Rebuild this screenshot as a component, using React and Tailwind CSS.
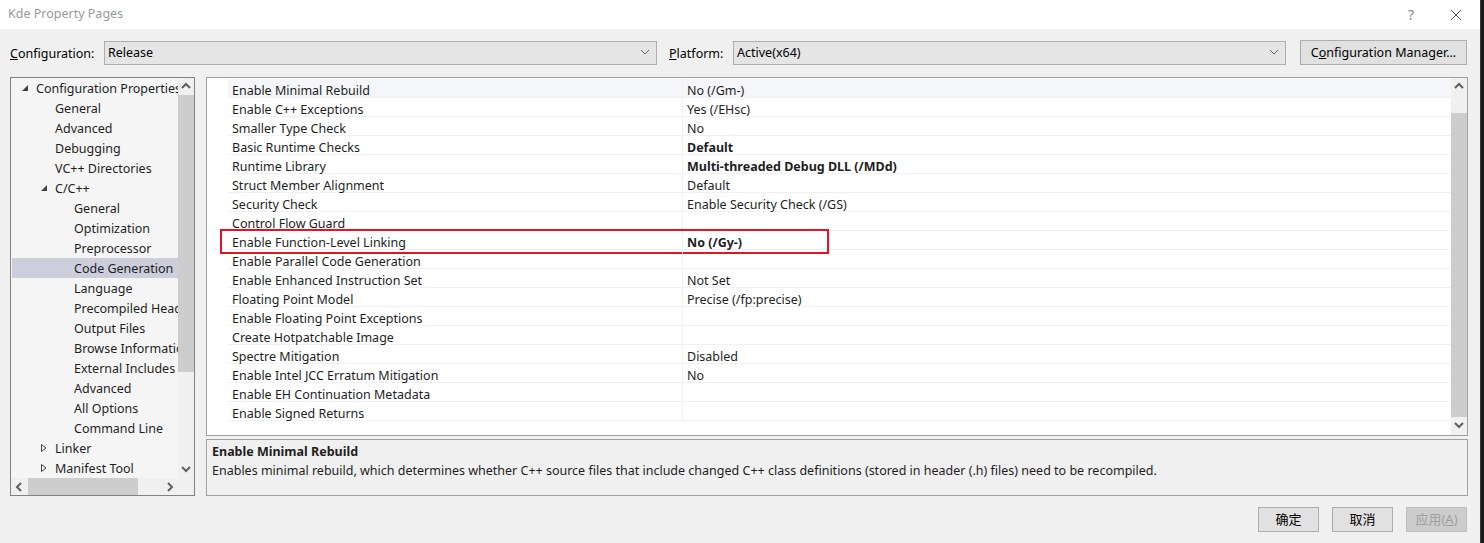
import React from "react";

const FONT = { fontFamily: '"Noto Sans", "Noto Sans CJK SC", sans-serif' };

const treeItems = [
  { label: "Configuration Properties", indent: 0, arrow: "open" },
  { label: "General", indent: 1 },
  { label: "Advanced", indent: 1 },
  { label: "Debugging", indent: 1 },
  { label: "VC++ Directories", indent: 1 },
  { label: "C/C++", indent: 1, arrow: "open" },
  { label: "General", indent: 2 },
  { label: "Optimization", indent: 2 },
  { label: "Preprocessor", indent: 2 },
  { label: "Code Generation", indent: 2, selected: true },
  { label: "Language", indent: 2 },
  { label: "Precompiled Headers", indent: 2 },
  { label: "Output Files", indent: 2 },
  { label: "Browse Information", indent: 2 },
  { label: "External Includes", indent: 2 },
  { label: "Advanced", indent: 2 },
  { label: "All Options", indent: 2 },
  { label: "Command Line", indent: 2 },
  { label: "Linker", indent: 1, arrow: "closed" },
  { label: "Manifest Tool", indent: 1, arrow: "closed" },
];

const props = [
  ["Enable Minimal Rebuild", "No (/Gm-)"],
  ["Enable C++ Exceptions", "Yes (/EHsc)"],
  ["Smaller Type Check", "No"],
  ["Basic Runtime Checks", "Default", true],
  ["Runtime Library", "Multi-threaded Debug DLL (/MDd)", true],
  ["Struct Member Alignment", "Default"],
  ["Security Check", "Enable Security Check (/GS)"],
  ["Control Flow Guard", ""],
  ["Enable Function-Level Linking", "No (/Gy-)", true, true],
  ["Enable Parallel Code Generation", ""],
  ["Enable Enhanced Instruction Set", "Not Set"],
  ["Floating Point Model", "Precise (/fp:precise)"],
  ["Enable Floating Point Exceptions", ""],
  ["Create Hotpatchable Image", ""],
  ["Spectre Mitigation", "Disabled"],
  ["Enable Intel JCC Erratum Mitigation", "No"],
  ["Enable EH Continuation Metadata", ""],
  ["Enable Signed Returns", ""],
];

function Chevron({ dir = "down", bold = false }) {
  const pts = {
    down: "1,2 5,6 9,2",
    up: "1,6 5,2 9,6",
    left: "6,1 2,5 6,9",
    right: "3,1 7,5 3,9",
  }[dir];
  return (
    <svg width="10" height="10" viewBox="0 0 10 10">
      <polyline points={pts} fill="none" stroke="#606060" strokeWidth={bold ? 2 : 1} />
    </svg>
  );
}

function TreeArrow({ type }) {
  if (type === "open") {
    return (
      <svg width="8" height="8" viewBox="0 0 8 8">
        <polygon points="7,1 7,7 1,7" fill="#404040" />
      </svg>
    );
  }
  return (
    <svg width="8" height="10" viewBox="0 0 8 10">
      <polygon points="1.5,1.5 6,5 1.5,8.5" fill="none" stroke="#404040" />
    </svg>
  );
}

function Dropdown({ value }) {
  return (
    <div className="w-[553px] h-[24px] bg-[#e5e5e5] border border-[#adadad] flex items-center pl-[3px] pr-[6px]">
      <span className="flex-1 pt-[2px] text-[12.5px] text-black">{value}</span>
      <Chevron dir="down" />
    </div>
  );
}

function Tree() {
  return (
    <div className="w-[185px] h-[419px] border border-[#828282] bg-[#f5f5f5] flex flex-col">
      <div className="flex h-[400px]">
        <div className="w-[167px] overflow-hidden pl-[1px]">
          {treeItems.map((it, i) => (
            <div
              key={i}
              className={`h-[20px] flex items-center whitespace-nowrap text-[12.5px] text-[#1e1e1e] ${it.selected ? "bg-[#cccedb]" : ""}`}
            >
              <div
                className={`flex items-center justify-center w-[14px] shrink-0 ${
                  it.indent === 0 ? "ml-[6px]" : it.indent === 1 ? "ml-[25px]" : "ml-[44px]"
                }`}
              >
                {it.arrow && <TreeArrow type={it.arrow} />}
              </div>
              <span className="ml-[4px] pt-[2px]">{it.label}</span>
            </div>
          ))}
        </div>
        <div className="w-[16px] bg-[#f0f0f0] flex flex-col items-center">
          <div className="h-[17px] flex items-center justify-center">
            <Chevron dir="up" bold />
          </div>
          <div className="w-full h-[277px] bg-[#cdcdcd]"></div>
          <div className="flex-1"></div>
          <div className="h-[17px] flex items-center justify-center">
            <Chevron dir="down" bold />
          </div>
        </div>
      </div>
      <div className="flex h-[17px]">
        <div className="w-[167px] bg-[#f0f0f0] flex items-center">
          <div className="w-[17px] flex items-center justify-center">
            <Chevron dir="left" bold />
          </div>
          <div className="w-[110px] h-full bg-[#cdcdcd]"></div>
          <div className="flex-1"></div>
          <div className="w-[17px] flex items-center justify-center">
            <Chevron dir="right" bold />
          </div>
        </div>
        <div className="w-[16px] bg-[#f0f0f0]"></div>
      </div>
    </div>
  );
}

function Grid() {
  return (
    <div className="h-[359px] border border-[#a0a0a0] bg-white flex">
      <div className="flex-1 pt-[1px] pl-[21px] flex flex-col">
        {props.map(([name, value, bold, boxed], i) => (
          <div
            key={i}
            className={`relative h-[19px] flex border-b border-[#f0f0f5] text-[12.5px] text-[#1e1e1e] ${i === 0 ? "bg-[#f4f6fa]" : ""}`}
          >
            <div className="w-[455px] border-r border-[#f0f0f5] pl-[4px] pt-[7px] flex items-center whitespace-nowrap">
              {name}
            </div>
            <div className={`flex-1 pl-[4px] pt-[7px] flex items-center whitespace-nowrap ${bold ? "font-bold" : ""}`}>
              {value}
            </div>
            {boxed && (
              <div className="absolute left-[-8px] top-[-2px] w-[609px] h-[25px] border-2 border-[#e81123]"></div>
            )}
          </div>
        ))}
      </div>
      <div className="w-[16px] bg-[#f0f0f0] flex flex-col items-center">
        <div className="h-[17px] flex items-center justify-center">
          <Chevron dir="up" bold />
        </div>
        <div className="h-[18px]"></div>
        <div className="w-full h-[304px] bg-[#cdcdcd]"></div>
        <div className="flex-1 flex items-center justify-center">
          <Chevron dir="down" bold />
        </div>
      </div>
    </div>
  );
}

function Button({ children, disabled }) {
  return (
    <div
      className={`w-[61px] h-[25px] border flex items-center justify-center text-[13px] ${
        disabled ? "bg-[#cccccc] border-[#bfbfbf] text-[#a0a0a0]" : "bg-[#e1e1e1] border-[#adadad] text-black"
      }`}
    >
      {children}
    </div>
  );
}

export default function App() {
  return (
    <div className="w-[1484px] h-[543px] flex bg-[#1c1c1c] overflow-hidden" style={FONT}>
      <div className="w-[1480px] h-full flex flex-col bg-[#f0f0f0]">
        {/* Title bar */}
        <div className="h-[29px] bg-white flex items-center pl-[8px]">
          <span className="flex-1 text-[12.5px] text-[#999999]">Kde Property Pages</span>
          <span className="text-[14px] text-[#888888] mr-[36px]">?</span>
          <svg width="12" height="12" viewBox="0 0 12 12" className="mr-[18px]">
            <path d="M1 1 L11 11 M11 1 L1 11" stroke="#555555" strokeWidth="1" />
          </svg>
        </div>

        {/* Configuration row */}
        <div className="mt-[11px] h-[25px] flex items-center pl-[10px] text-[12.5px]">
          <span className="w-[94px] pt-[3px] text-black">
            <span className="underline">C</span>onfiguration:
          </span>
          <Dropdown value="Release" />
          <span className="ml-[12px] w-[64px] pt-[3px] text-black">
            <span className="underline">P</span>latform:
          </span>
          <Dropdown value="Active(x64)" />
          <div className="ml-[14px] w-[167px] h-[25px] pt-[2px] bg-[#e1e1e1] border border-[#adadad] flex items-center justify-center text-black">
            C<span className="underline">o</span>nfiguration Manager...
          </div>
        </div>

        {/* Main */}
        <div className="mt-[12px] flex pl-[10px]">
          <Tree />
          <div className="ml-[11px] w-[1262px] flex flex-col">
            <Grid />
            <div className="mt-[3px] h-[57px] border border-[#a0a0a0] bg-[#f0f0f0] pl-[5px] pt-[3px] text-[12.5px] text-[#1e1e1e]">
              <div className="font-bold h-[19px] flex items-center">Enable Minimal Rebuild</div>
              <div className="h-[18px] flex items-center whitespace-nowrap">
                Enables minimal rebuild, which determines whether C++ source files that include changed C++ class
                definitions (stored in header (.h) files) need to be recompiled.
              </div>
            </div>
          </div>
        </div>

        {/* Buttons */}
        <div className="mt-[11px] flex justify-end gap-[13px] pr-[13px]">
          <Button>确定</Button>
          <Button>取消</Button>
          <Button disabled>
            应用(<span className="underline">A</span>)
          </Button>
        </div>
      </div>
      <div className="w-[4px] h-full bg-[#1c1c1c] border-l border-[#3a3a3a]"></div>
    </div>
  );
}
